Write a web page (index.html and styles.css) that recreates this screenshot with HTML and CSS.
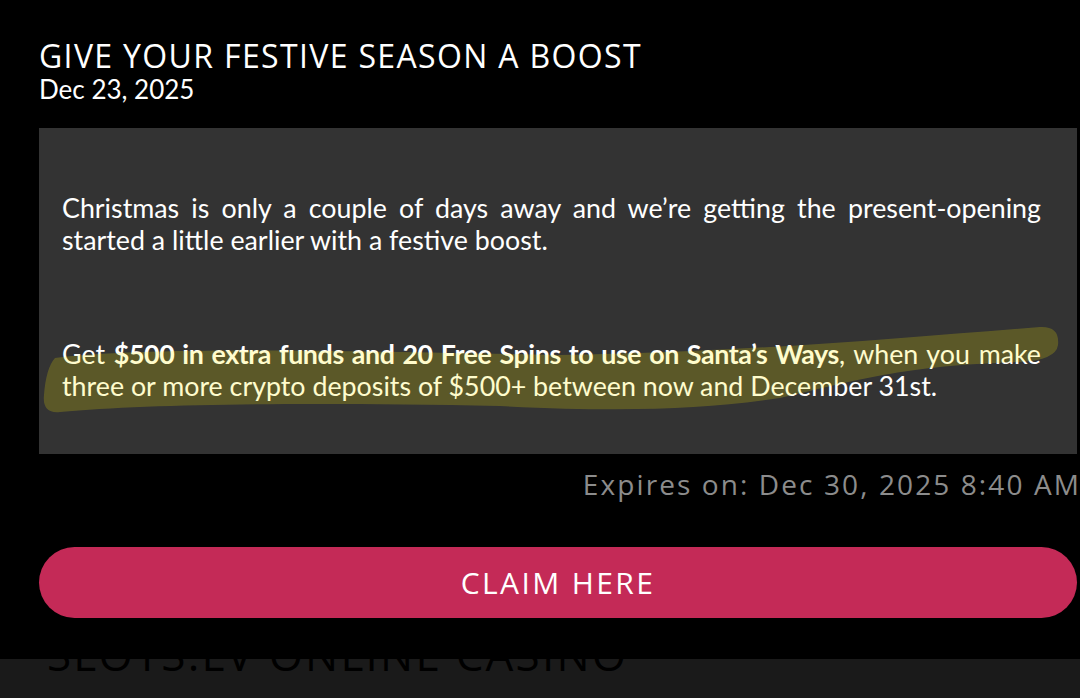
FILE: index.html
```html
<!DOCTYPE html>
<html>
<head>
<meta charset="utf-8">
<link rel="stylesheet" href="styles.css">
</head>
<body>
<main class="page">
  <h1 class="title">GIVE YOUR FESTIVE SEASON A BOOST</h1>
  <div class="date">Dec 23, 2025</div>
  <section class="box">
    <p class="para">Christmas is only a couple of days away and we’re getting the present-opening started a little earlier with a festive boost.</p>
    <p class="para">Get <b>$500 in extra funds and 20 Free Spins to use on Santa’s Ways</b>, when you make three or more crypto deposits of $500+ between now and December 31st.</p>
    <svg class="marker" viewBox="0 0 1038 326" width="1038" height="326">
      <path d="M16 230 C110 217 360 224 520 227 C710 224 860 210 1001 199 Q1021 198 1019 217 Q1017 232 981 234 C861 238 821 252 741 270 C661 282 581 284 461 278 C261 274 111 276 21 284 Q3 286 5 267 Q7 240 16 230 Z"/>
    </svg>
  </section>
  <div class="expires">Expires on: Dec 30, 2025 8:40 AM</div>
  <a class="claim">CLAIM HERE</a>
</main>
<footer class="footer">
  <div class="brand">SLOTS.LV ONLINE CASINO</div>
</footer>
</body>
</html>
```

FILE: styles.css
```css
html, body {
  margin: 0;
  padding: 0;
  background: #000;
  overflow: hidden;
}
.page {
  padding: 0 0 0 39px;
  width: 1038px;
  display: flex;
  flex-direction: column;
}
.title {
  margin: 38px 0 0;
  font-family: "Open Sans", sans-serif;
  font-weight: 400;
  font-size: 32px;
  line-height: 36px;
  color: #fff;
  letter-spacing: 1.35px;
}
.date {
  font-family: "Lato", sans-serif;
  font-size: 26px;
  line-height: 30px;
  color: #fff;
}
.box {
  position: relative;
  margin-top: 24px;
  height: 326px;
  box-sizing: border-box;
  background: #333333;
  padding: 64px 36px 0 23px;
  display: flex;
  flex-direction: column;
  gap: 82px;
}
.para {
  margin: 0;
  font-family: "Lato", sans-serif;
  font-size: 26.8px;
  line-height: 32px;
  color: #fff;
  text-align: justify;
}
.para b {
  font-weight: 700;
  letter-spacing: -0.4px;
}
.marker {
  position: absolute;
  left: 0;
  top: 0;
  pointer-events: none;
}
.marker path {
  fill: rgb(255, 238, 0);
  fill-opacity: 0.2;
}
.expires {
  margin-top: 12px;
  align-self: flex-end;
  margin-right: -4px;
  font-family: "Open Sans", sans-serif;
  font-size: 28px;
  line-height: 36px;
  color: #8c8c8c;
  letter-spacing: 2.1px;
}
.claim {
  margin-top: 45px;
  height: 71px;
  border-radius: 36px;
  background: #c42a57;
  color: #fff;
  display: flex;
  align-items: center;
  justify-content: center;
  font-family: "Open Sans", sans-serif;
  font-size: 30px;
  letter-spacing: 2.4px;
}
.footer {
  margin-top: 41px;
  height: 40px;
  background: #1a1a1a;
  overflow: hidden;
  padding-left: 47px;
}
.brand {
  margin-top: -33px;
  font-family: "Open Sans", sans-serif;
  font-size: 44px;
  line-height: 56px;
  color: #000;
  white-space: nowrap;
  letter-spacing: 2.2px;
}
```
